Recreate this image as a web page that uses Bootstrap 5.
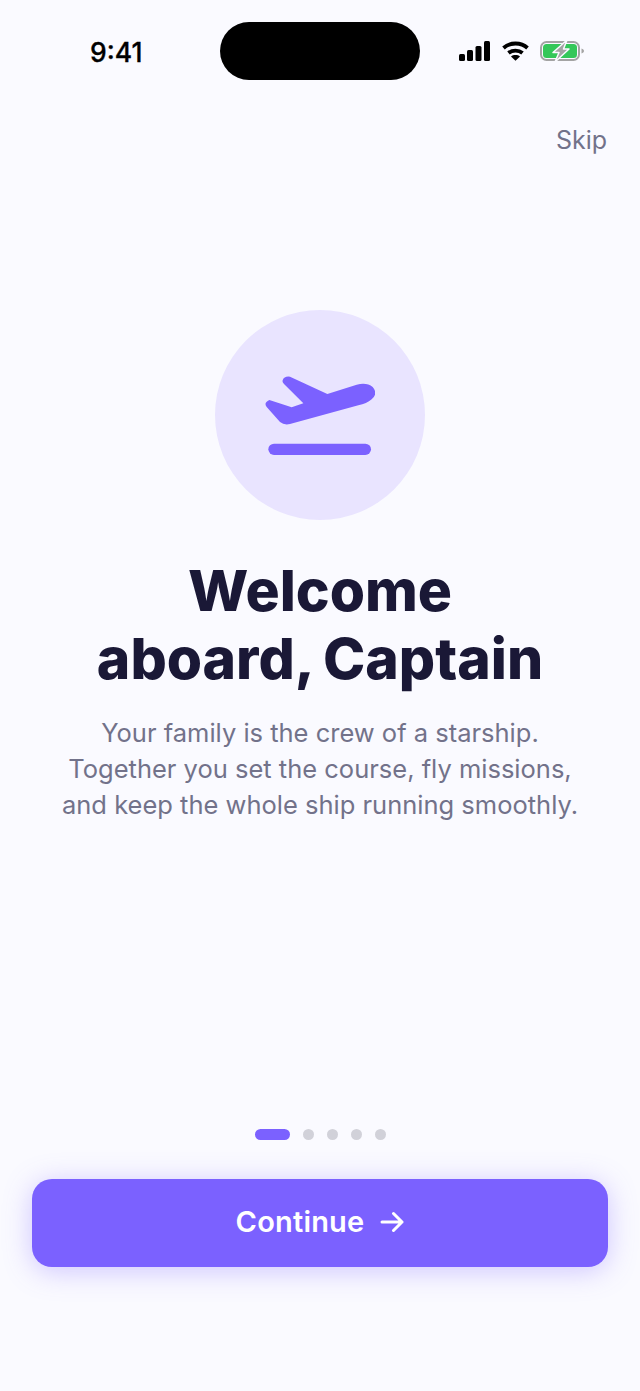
<!DOCTYPE html>
<html lang="en">
<head>
  <meta charset="UTF-8" />
  <meta name="viewport" content="width=device-width, initial-scale=1.0"/>
  <title>Welcome aboard</title>
  <link href="https://cdn.jsdelivr.net/npm/bootstrap@5.3.2/dist/css/bootstrap.min.css" rel="stylesheet">
  <style>
    body { background: #fafaff; font-family: "Inter", "Liberation Sans", sans-serif; }
    .screen { height: 1391px; width: 640px; overflow: hidden; }
    .status-row { height: 58px; margin-top: 22px; padding: 0 56px 0 90px; }
    .clock { width: 130px; font-size: 26.5px; font-weight: 500; color: #000; line-height: 1; padding-top: 2px; -webkit-text-stroke: .3px #000; }
    .island { width: 200px; height: 58px; background: #000; border-radius: 29px; }
    .status-icons { margin-left: auto; gap: 11.5px; }
    .skip-row { padding: 44px 33px 0 0; height: 230px; }
    .skip-link { font-size: 25px; line-height: 32px; color: #72728a; text-decoration: none; }
    .hero-circle { width: 210px; height: 210px; background: #e9e4ff; }
    .hero-title { margin: 37px 0 0; font-size: 57px; line-height: 68px; font-weight: 800; color: #1a1836; word-spacing: -2px; }
    .hero-text { margin: 22px 0 0; font-size: 25.5px; line-height: 36px; color: #72728a; }
    .pager { margin-top: 306px; gap: 13px; height: 12px; }
    .pager-dot { width: 11px; height: 11px; background: #d1d1d9; }
    .pager-dot.active { width: 35px; background: #7b61ff; }
    .continue-btn { margin: 38px 32px 0; padding-bottom: 8px; height: 88px; width: 576px; border: 0; border-radius: 20px; background: #7b61ff; color: #fff; font-size: 29px; font-weight: 600; letter-spacing: .2px; box-shadow: 0 4px 28px rgba(123, 97, 255, .34); }
    .continue-btn:hover { background: #7b61ff; color: #fff; }
  </style>
</head>
<body>
  <div class="screen d-flex flex-column">
    <div class="status-row d-flex align-items-center">
      <div class="clock">9:41</div>
      <div class="island"></div>
      <div class="status-icons d-flex align-items-center">
        <svg width="31" height="20" viewBox="0 0 31 20" fill="#000">
          <rect x="0" y="13" width="6" height="7" rx="1.5"/>
          <rect x="8" y="9" width="6" height="11" rx="1.5"/>
          <rect x="16.500" y="5" width="6" height="15" rx="1.5"/>
          <rect x="25" y="0" width="6" height="20" rx="1.5"/>
        </svg>
        <svg width="27" height="20" viewBox="0 0 27 20" fill="none" stroke="#000" stroke-width="3.800">
          <path d="M1.500 7C8 1 19 1 25.500 7"/>
          <path d="M6.500 12C10.300 8.700 16.700 8.700 20.500 12"/>
          <path d="M13.500 19.800L9 15.400C11.300 13.500 15.700 13.500 18 15.400Z" fill="#000" stroke="none"/>
        </svg>
        <svg width="44" height="20" viewBox="0 0 44 20" class="overflow-visible">
          <rect x="1" y="1" width="38" height="18" rx="5.500" fill="none" stroke="#a4a4a4" stroke-width="2"/>
          <rect x="3" y="3" width="34" height="14" rx="3.500" fill="#34c759"/>
          <path d="M41.500 7.500v5c1.500-.5 2.500-1.300 2.500-2.500s-1-2-2.500-2.500Z" fill="#a4a4a4"/>
          <path d="M27 -1L13 11.500H19L15 21L29 8H23.500Z" fill="#a4a4a4" stroke="#fafaff" stroke-width="1.500" stroke-linejoin="round"/>
        </svg>
      </div>
    </div>
    <div class="skip-row text-end">
      <a href="#" class="skip-link">Skip</a>
    </div>
    <div class="d-flex justify-content-center">
      <div class="hero-circle rounded-circle d-flex align-items-center justify-content-center">
        <svg width="110.700" height="79" viewBox="165 212 332 237" fill="#7b61ff">
          <path d="M218 225Q222 212 240 214L352 266L440 238Q470 230 488 245Q505 265 485 282Q470 295 445 300L240 356Q222 360 210 350L170 305Q160 292 178 284L245 306L280 294L222 236Q216 230 218 225Z"/>
          <rect x="175" y="415" width="308" height="34" rx="17"/>
        </svg>
      </div>
    </div>
    <h1 class="hero-title text-center">Welcome<br>aboard, Captain</h1>
    <p class="hero-text text-center">Your family is the crew of a starship.<br>Together you set the course, fly missions,<br>and keep the whole ship running smoothly.</p>
    <div class="pager d-flex justify-content-center">
      <span class="pager-dot active rounded-pill"></span>
      <span class="pager-dot rounded-circle"></span>
      <span class="pager-dot rounded-circle"></span>
      <span class="pager-dot rounded-circle"></span>
      <span class="pager-dot rounded-circle"></span>
    </div>
    <button type="button" class="btn continue-btn d-flex align-items-center justify-content-center gap-3">
      <span>Continue</span>
      <svg width="24" height="22" viewBox="0 0 24 22" fill="none" stroke="#fff" stroke-width="3" stroke-linecap="round" stroke-linejoin="round">
        <path d="M2 11H22M13.500 2.500L22 11L13.500 19.500"/>
      </svg>
    </button>
  </div>
  <script src="https://cdn.jsdelivr.net/npm/bootstrap@5.3.2/dist/js/bootstrap.bundle.min.js"></script>
</body>
</html>
